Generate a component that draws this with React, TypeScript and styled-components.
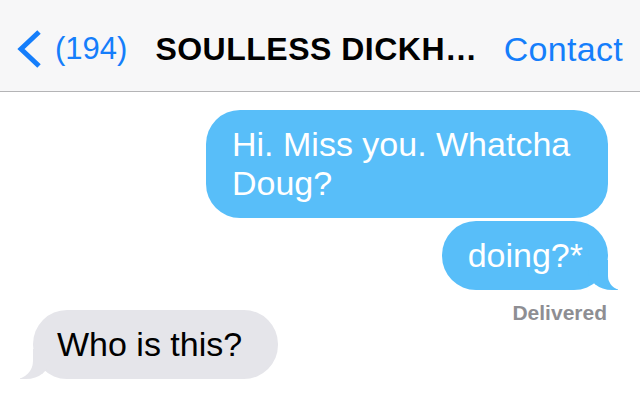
import React from "react";
import styled, { createGlobalStyle, css } from "styled-components";

const Global = createGlobalStyle`
  html, body { margin: 0; padding: 0; background: #ffffff; }
  body { font-family: "Liberation Sans", Arial, Helvetica, sans-serif; -webkit-font-smoothing: antialiased; }
  #root { width: 640px; height: 413px; overflow: hidden; }
`;

const BLUE = "#58bef9";
const GRAY = "#e5e5ea";
const LINK = "#157efb";

const Screen = styled.div`
  width: 640px;
  height: 413px;
  display: flex;
  flex-direction: column;
  background: #ffffff;
`;

const NavBar = styled.header`
  height: 84px;
  padding: 7px 17px 0 15px;
  display: flex;
  align-items: center;
  background: #f7f7f8;
  border-bottom: 1px solid #b4b4b6;
`;

const BackButton = styled.div`
  display: flex;
  align-items: center;
  gap: 13px;
  color: ${LINK};
`;

const BackCount = styled.span`
  font-size: 31px;
  line-height: 36px;
`;

const Title = styled.h1`
  margin: 0 0 0 28px;
  font-size: 32px;
  line-height: 36px;
  font-weight: 700;
  letter-spacing: 0.5px;
  color: #000;
  white-space: nowrap;
`;

const NavAction = styled.span`
  margin-left: auto;
  font-size: 34px;
  line-height: 36px;
  letter-spacing: 0.3px;
  color: ${LINK};
`;

const Thread = styled.main`
  flex: 1;
  display: flex;
  flex-direction: column;
  padding: 18px 32px 0 33px;
`;

const SentGroup = styled.div`
  position: relative;
  display: flex;
  flex-direction: column;
  align-items: flex-end;
  gap: 3px;
`;

const tail = (side: "right" | "left", color: string) => css`
  &::before,
  &::after {
    content: "";
    position: absolute;
    bottom: 0;
    height: 30px;
  }
  &::before {
    width: 30px;
    background: ${color};
    ${side === "right"
      ? css`
          right: -10px;
          border-bottom-left-radius: 24px 20px;
        `
      : css`
          left: -13px;
          border-bottom-right-radius: 24px 20px;
        `}
  }
  &::after {
    width: 30px;
    background: #ffffff;
    ${side === "right"
      ? css`
          right: -30px;
          border-bottom-left-radius: 14px;
        `
      : css`
          left: -30px;
          border-bottom-right-radius: 18px;
        `}
  }
`;

const Bubble = styled.div<{ $from: "me" | "them"; $tail?: boolean }>`
  position: relative;
  box-sizing: border-box;
  max-width: 402px;
  padding: 15px ${(p) => (p.$from === "me" ? "25px" : "36px")} 15px
    ${(p) => (p.$from === "me" ? "26px" : "24px")};
  border-radius: 34px;
  font-size: 34px;
  line-height: 39px;
  background: ${(p) => (p.$from === "me" ? BLUE : GRAY)};
  color: ${(p) => (p.$from === "me" ? "#ffffff" : "#000000")};
  align-self: ${(p) => (p.$from === "me" ? "flex-end" : "flex-start")};
  ${(p) => p.$tail && tail(p.$from === "me" ? "right" : "left", p.$from === "me" ? BLUE : GRAY)}
`;

const Status = styled.span`
  position: absolute;
  top: calc(100% + 11px);
  right: 1px;
  font-size: 21px;
  line-height: 24px;
  font-weight: 700;
  color: #8e8e93;
`;

const Received = styled.div`
  margin-top: 20px;
  display: flex;
`;

const Chevron = () => (
  <svg width="27" height="40" viewBox="0 0 27 40" aria-hidden="true">
    <polyline
      points="24,3 6,20 24,37"
      fill="none"
      stroke={LINK}
      strokeWidth="5"
      strokeLinejoin="miter"
      strokeLinecap="butt"
    />
  </svg>
);

export default function App() {
  return (
    <>
      <Global />
      <Screen>
        <NavBar>
          <BackButton>
            <Chevron />
            <BackCount>(194)</BackCount>
          </BackButton>
          <Title>SOULLESS DICKH…</Title>
          <NavAction>Contact</NavAction>
        </NavBar>
        <Thread>
          <SentGroup>
            <Bubble $from="me">Hi. Miss you. Whatcha Doug?</Bubble>
            <Bubble $from="me" $tail>
              doing?*
            </Bubble>
            <Status>Delivered</Status>
          </SentGroup>
          <Received>
            <Bubble $from="them" $tail>
              Who is this?
            </Bubble>
          </Received>
        </Thread>
      </Screen>
    </>
  );
}
